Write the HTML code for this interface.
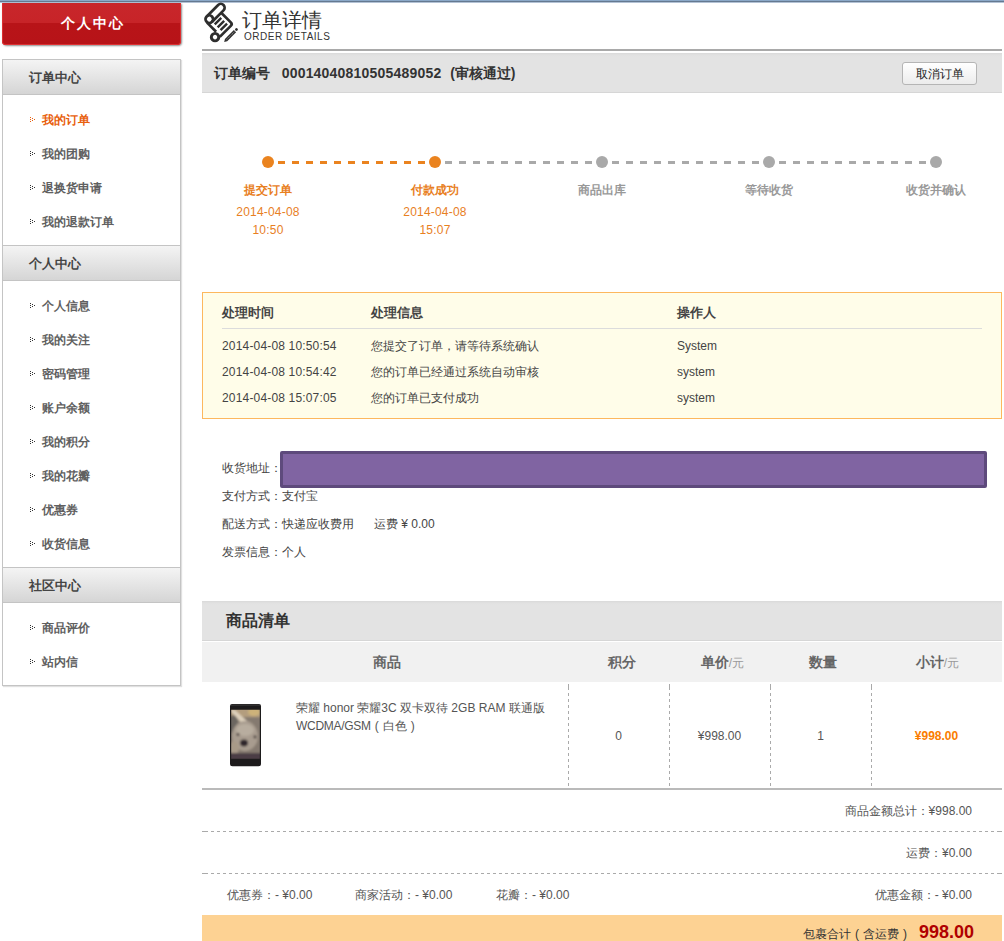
<!DOCTYPE html>
<html><head><meta charset="utf-8">
<style>
*{margin:0;padding:0;box-sizing:border-box}
html,body{width:1004px;height:941px;overflow:hidden;background:#fff;font-family:"Liberation Sans",sans-serif;font-size:12px;color:#555}
.abs{position:absolute}
#topline{left:0;top:0;width:1004px;height:2px;background:linear-gradient(#8aa8c8 50%,#657990 50%)}
#topline2{left:0;top:2px;width:1004px;height:1px;background:#b3c2d5}
#redbtn{left:2px;top:3px;width:179px;height:42px;border-radius:0 0 4px 4px;background:linear-gradient(#c8262b 0,#c72428 20px,#b81418 20px,#b71318 100%);box-shadow:inset 1px 0 0 #dc2d2f,inset -1px 0 0 #dc2d2f,inset 0 -1px 0 #de3133,1px 1px 2px rgba(0,0,0,.45);color:#fff;font-weight:bold;font-size:14px;text-align:center;line-height:40px;letter-spacing:2px;text-indent:2px}
#side{left:2px;top:59px;width:179px;height:627px;border:1px solid #c4c4c4;box-shadow:1px 1px 1px rgba(0,0,0,.12)}
.sh{position:absolute;left:0;width:177px;height:36px;border-top:1px solid #c4c4c4;border-bottom:1px solid #c4c4c4;background:linear-gradient(#f4f4f4,#d5d5d5);font-weight:bold;font-size:13px;color:#444;line-height:35px;padding-left:26px}
.si{position:absolute;left:0;width:177px;height:34px;line-height:36px;font-weight:bold;font-size:12px;color:#606060;padding-left:39px}
.si svg{position:absolute;left:27px;top:15px;color:#333}
.si.on svg{color:#e8600e}
.si.on{color:#e8600e}

#icon{left:200px;top:0;width:45px;height:45px}
#t1{left:242px;top:6px;font-size:20px;color:#333;line-height:28px;white-space:nowrap}
#t2{left:244px;top:30.6px;font-size:10px;color:#333;line-height:12px;white-space:nowrap;letter-spacing:0.5px}
#hline{left:202px;top:49px;width:800px;height:2px;background:#a9a9a9}
#obar{left:202px;top:53px;width:800px;height:40px;background:linear-gradient(#d9d9d9 0,#e1e1e1 2px,#e3e3e3 4px,#e3e3e3 calc(100% - 1px),#d6d6d6 calc(100% - 1px));font-size:14px;font-weight:bold;color:#333;line-height:40px;padding-left:12px;white-space:nowrap}
#cancel{left:902px;top:62px;width:75px;height:23px;border:1px solid #b5b5b5;border-radius:3px;background:linear-gradient(#fff,#ececec);font-size:12px;color:#222;line-height:22px;text-align:center}
.dot{position:absolute;width:12px;height:12px;border-radius:50%;top:156px}
.dash{position:absolute;top:161px;height:3px}
.lab{position:absolute;top:182px;width:120px;text-align:center;font-weight:bold;font-size:12px;line-height:16px;color:#999}
.dt{position:absolute;top:203px;width:120px;text-align:center;font-size:12px;line-height:18px;color:#e8801f;letter-spacing:.2px}
#log{left:202px;top:292px;width:800px;height:127px;border:1px solid #fdb85e;background:#fffde9}
.lh{position:absolute;top:12px;font-weight:bold;font-size:13px;color:#444;line-height:16px}
.lr{position:absolute;font-size:12px;color:#444;line-height:16px;white-space:nowrap}
.ts{letter-spacing:.17px}
.ad{position:absolute;left:222px;font-size:12px;color:#444;line-height:16px;white-space:nowrap}
#glist{left:202px;top:601px;width:800px;height:40px;background:linear-gradient(#d9d9d9 0,#e1e1e1 2px,#e3e3e3 4px,#e3e3e3 calc(100% - 1px),#d6d6d6 calc(100% - 1px));font-size:16px;font-weight:bold;color:#333;line-height:40px;padding-left:24px}
#ghead{left:202px;top:642px;width:800px;height:40px;background:#f1f1f1}
.gh{position:absolute;top:0;line-height:41px;text-align:center;font-weight:bold;font-size:14px;color:#666}
.gh span{font-weight:normal;color:#999;font-size:12px}
.vd{position:absolute;top:684px;height:104px;width:1px;background:linear-gradient(#aaa 0,#aaa 3px,transparent 3px) no-repeat,repeating-linear-gradient(transparent 0,transparent 3px,#aaa 3px,#aaa 6px)}
.gc{position:absolute;top:728px;text-align:center;font-size:12px;color:#555;line-height:16px}
#gbot{left:202px;top:788px;width:800px;height:2px;background:#bababa}
.hd{position:absolute;left:202px;width:800px;height:1px;background:linear-gradient(90deg,#aaa 0,#aaa 3px,transparent 3px) no-repeat,linear-gradient(90deg,transparent calc(100% - 5px),#aaa calc(100% - 5px)) no-repeat,repeating-linear-gradient(90deg,transparent 0,transparent 3px,#aaa 3px,#aaa 6px)}
.tr{position:absolute;right:32px;font-size:12px;color:#555;line-height:16px;white-space:nowrap}
.tl{position:absolute;font-size:12px;color:#555;line-height:16px;white-space:nowrap}
#total{left:202px;top:915px;width:800px;height:30px;background:#fdd293}
.fp{display:inline-block;width:12px;text-align:center}
</style></head><body>
<div id="topline" class="abs"></div>
<div id="topline2" class="abs"></div>
<div id="redbtn" class="abs">个人中心</div>

<div id="side" class="abs">
  <div class="sh" style="top:-1px">订单中心</div>
  <div class="si on" style="top:42px"><svg width="6" height="6" viewBox="0 0 6 6"><path d="M0 0h1v1H0zM0 2h1v1H0zM0 4h1v1H0zM2 1h1v1H2zM2 3h1v1H2zM4 2h1v1H4z" fill="currentColor"/></svg>我的订单</div>
  <div class="si" style="top:76px"><svg width="6" height="6" viewBox="0 0 6 6"><path d="M0 0h1v1H0zM0 2h1v1H0zM0 4h1v1H0zM2 1h1v1H2zM2 3h1v1H2zM4 2h1v1H4z" fill="currentColor"/></svg>我的团购</div>
  <div class="si" style="top:110px"><svg width="6" height="6" viewBox="0 0 6 6"><path d="M0 0h1v1H0zM0 2h1v1H0zM0 4h1v1H0zM2 1h1v1H2zM2 3h1v1H2zM4 2h1v1H4z" fill="currentColor"/></svg>退换货申请</div>
  <div class="si" style="top:144px"><svg width="6" height="6" viewBox="0 0 6 6"><path d="M0 0h1v1H0zM0 2h1v1H0zM0 4h1v1H0zM2 1h1v1H2zM2 3h1v1H2zM4 2h1v1H4z" fill="currentColor"/></svg>我的退款订单</div>
  <div class="sh" style="top:185px">个人中心</div>
  <div class="si" style="top:228px"><svg width="6" height="6" viewBox="0 0 6 6"><path d="M0 0h1v1H0zM0 2h1v1H0zM0 4h1v1H0zM2 1h1v1H2zM2 3h1v1H2zM4 2h1v1H4z" fill="currentColor"/></svg>个人信息</div>
  <div class="si" style="top:262px"><svg width="6" height="6" viewBox="0 0 6 6"><path d="M0 0h1v1H0zM0 2h1v1H0zM0 4h1v1H0zM2 1h1v1H2zM2 3h1v1H2zM4 2h1v1H4z" fill="currentColor"/></svg>我的关注</div>
  <div class="si" style="top:296px"><svg width="6" height="6" viewBox="0 0 6 6"><path d="M0 0h1v1H0zM0 2h1v1H0zM0 4h1v1H0zM2 1h1v1H2zM2 3h1v1H2zM4 2h1v1H4z" fill="currentColor"/></svg>密码管理</div>
  <div class="si" style="top:330px"><svg width="6" height="6" viewBox="0 0 6 6"><path d="M0 0h1v1H0zM0 2h1v1H0zM0 4h1v1H0zM2 1h1v1H2zM2 3h1v1H2zM4 2h1v1H4z" fill="currentColor"/></svg>账户余额</div>
  <div class="si" style="top:364px"><svg width="6" height="6" viewBox="0 0 6 6"><path d="M0 0h1v1H0zM0 2h1v1H0zM0 4h1v1H0zM2 1h1v1H2zM2 3h1v1H2zM4 2h1v1H4z" fill="currentColor"/></svg>我的积分</div>
  <div class="si" style="top:398px"><svg width="6" height="6" viewBox="0 0 6 6"><path d="M0 0h1v1H0zM0 2h1v1H0zM0 4h1v1H0zM2 1h1v1H2zM2 3h1v1H2zM4 2h1v1H4z" fill="currentColor"/></svg>我的花瓣</div>
  <div class="si" style="top:432px"><svg width="6" height="6" viewBox="0 0 6 6"><path d="M0 0h1v1H0zM0 2h1v1H0zM0 4h1v1H0zM2 1h1v1H2zM2 3h1v1H2zM4 2h1v1H4z" fill="currentColor"/></svg>优惠券</div>
  <div class="si" style="top:466px"><svg width="6" height="6" viewBox="0 0 6 6"><path d="M0 0h1v1H0zM0 2h1v1H0zM0 4h1v1H0zM2 1h1v1H2zM2 3h1v1H2zM4 2h1v1H4z" fill="currentColor"/></svg>收货信息</div>
  <div class="sh" style="top:507px">社区中心</div>
  <div class="si" style="top:550px"><svg width="6" height="6" viewBox="0 0 6 6"><path d="M0 0h1v1H0zM0 2h1v1H0zM0 4h1v1H0zM2 1h1v1H2zM2 3h1v1H2zM4 2h1v1H4z" fill="currentColor"/></svg>商品评价</div>
  <div class="si" style="top:584px"><svg width="6" height="6" viewBox="0 0 6 6"><path d="M0 0h1v1H0zM0 2h1v1H0zM0 4h1v1H0zM2 1h1v1H2zM2 3h1v1H2zM4 2h1v1H4z" fill="currentColor"/></svg>站内信</div>
</div>

<svg id="icon" class="abs" viewBox="0 0 45 45" width="45" height="45"><g transform="translate(19,22) rotate(-45)" fill="none" stroke="#2e2e2e" stroke-width="2.7">
<path d="M-4.4,-12.6H11.4A3.8,3.8 0 0 1 11.4,-5H-5"/>
<circle cx="-4.8" cy="-8.9" r="3.8" stroke-width="2.8"/>
<path d="M-8.9,-8V4.8"/>
<path d="M8.1,-5V8.6A2.5,2.5 0 0 1 5.6,11.1H-10"/>
<circle cx="-13.5" cy="7.9" r="3.7" stroke-width="3"/>
<path d="M-4.7,-1.3H4.5M-4.7,2.8H4.5M-4.7,6.9H4.5" stroke-width="2.4"/>
<path d="M-10.5,17.8L-7.8,16.2H4.8V19.4H-7.8Z" fill="#2e2e2e" stroke="none"/>
<path d="M-7,17.8H4.3" stroke="#fff" stroke-width="0.6" stroke-dasharray="1 1"/>
<circle cx="7" cy="17.7" r="1.4" fill="#2e2e2e" stroke="none"/>
</g></svg>
<div id="t1" class="abs">订单详情</div>
<div id="t2" class="abs">ORDER DETAILS</div>
<div id="hline" class="abs"></div>
<div id="obar" class="abs">订单编号&nbsp;&nbsp;&nbsp;<span style="letter-spacing:.2px">00014040810505489052</span>&nbsp;&nbsp;<span style="margin-left:1px">(审核通过)</span></div>
<div id="cancel" class="abs">取消订单</div>
<div class="dot" style="left:262px;background:#ea831f"></div>
<div class="dot" style="left:429px;background:#ea831f"></div>
<div class="dot" style="left:596px;background:#a9a9a9"></div>
<div class="dot" style="left:763px;background:#a9a9a9"></div>
<div class="dot" style="left:930px;background:#a9a9a9"></div>
<div class="dash" style="left:278px;width:151px;background:repeating-linear-gradient(90deg,#ea831f 0 7px,transparent 7px 14px)"></div>
<div class="dash" style="left:445px;width:151px;background:repeating-linear-gradient(90deg,#a9a9a9 0 7px,transparent 7px 14px)"></div>
<div class="dash" style="left:612px;width:151px;background:repeating-linear-gradient(90deg,#a9a9a9 0 7px,transparent 7px 14px)"></div>
<div class="dash" style="left:779px;width:151px;background:repeating-linear-gradient(90deg,#a9a9a9 0 7px,transparent 7px 14px)"></div>
<div class="lab" style="left:208px;color:#e8801f">提交订单</div>
<div class="lab" style="left:375px;color:#e8801f">付款成功</div>
<div class="lab" style="left:542px;">商品出库</div>
<div class="lab" style="left:709px;">等待收货</div>
<div class="lab" style="left:876px;">收货并确认</div>
<div class="dt" style="left:208px">2014-04-08<br>10:50</div>
<div class="dt" style="left:375px">2014-04-08<br>15:07</div>

<div id="log" class="abs">
 <div class="lh" style="left:19px">处理时间</div>
 <div class="lh" style="left:168px">处理信息</div>
 <div class="lh" style="left:474px">操作人</div>
 <div class="abs" style="left:19px;top:35px;width:760px;height:1px;background:#dcdcdc"></div>
 <div class="lr ts" style="left:19px;top:45px">2014-04-08 10:50:54</div>
 <div class="lr" style="left:168px;top:45px">您提交了订单，请等待系统确认</div>
 <div class="lr" style="left:474px;top:45px">System</div>
 <div class="lr ts" style="left:19px;top:71px">2014-04-08 10:54:42</div>
 <div class="lr" style="left:168px;top:71px">您的订单已经通过系统自动审核</div>
 <div class="lr" style="left:474px;top:71px">system</div>
 <div class="lr ts" style="left:19px;top:97px">2014-04-08 15:07:05</div>
 <div class="lr" style="left:168px;top:97px">您的订单已支付成功</div>
 <div class="lr" style="left:474px;top:97px">system</div>
</div>
<div class="ad" style="top:460px">收货地址：</div>
<div class="abs" style="left:280px;top:451px;width:707px;height:37px;background:#8064a2;border:3px solid #5e4a7c;border-radius:2px"></div>
<div class="ad" style="top:488px">支付方式：支付宝</div>
<div class="ad" style="top:516px">配送方式：快递应收费用&nbsp;&nbsp;&nbsp;&nbsp;&nbsp;&nbsp;运费 ¥ 0.00</div>
<div class="ad" style="top:544px">发票信息：个人</div>

<div id="glist" class="abs">商品清单</div>
<div id="ghead" class="abs">
 <div class="gh" style="left:2px;width:366px">商品</div>
 <div class="gh" style="left:369px;width:101px">积分</div>
 <div class="gh" style="left:470px;width:101px">单价<span>/元</span></div>
 <div class="gh" style="left:570px;width:101px">数量</div>
 <div class="gh" style="left:670px;width:131px">小计<span>/元</span></div>
</div>
<svg class="abs" style="left:226px;top:700px" width="40" height="70" viewBox="0 0 40 70">
<defs><filter id="bl" x="-20%" y="-20%" width="140%" height="140%"><feGaussianBlur stdDeviation="0.9"/></filter>
<clipPath id="sc"><rect x="5.2" y="9.7" width="28.6" height="49"/></clipPath></defs>
<rect x="4" y="4" width="31" height="62.2" rx="2.5" fill="#1d1b1c"/>
<rect x="4.5" y="4.5" width="30" height="1.2" fill="#3a3838"/>
<g clip-path="url(#sc)"><g filter="url(#bl)">
<rect x="0" y="5" width="40" height="60" fill="#857a6f"/>
<rect x="0" y="8" width="40" height="9" fill="#b39d7e"/>
<ellipse cx="28" cy="12" rx="6" ry="4" fill="#cdb27a"/>
<path d="M4,10 L9,10 L22,22 L17,25Z" fill="#ddd0bc"/>
<ellipse cx="7" cy="24" rx="5" ry="9" fill="#6c6660"/>
<ellipse cx="19" cy="36" rx="13" ry="15" fill="#a89c8f"/>
<ellipse cx="19" cy="30" rx="9" ry="6" fill="#b8ad9f"/>
<ellipse cx="8" cy="48" rx="5" ry="7" fill="#a89a88"/>
<circle cx="12" cy="34.5" r="1.4" fill="#3d3432"/>
<circle cx="29" cy="37" r="1.4" fill="#3d3432"/>
<ellipse cx="18" cy="43" rx="4" ry="3.4" fill="#2f2529"/>
<rect x="0" y="53" width="40" height="8" fill="#4b3d45"/>
</g></g>
</svg>
<div class="tl" style="left:296px;top:699px;line-height:18px;color:#555">荣耀 honor 荣耀3C 双卡双待 2GB RAM 联通版<br><span style="letter-spacing:-.28px">WCDMA/GSM</span><span class="fp">(</span>白色<span class="fp">)</span></div>
<div class="vd" style="left:568px"></div>
<div class="vd" style="left:669px"></div>
<div class="vd" style="left:770px"></div>
<div class="vd" style="left:871px"></div>
<div class="gc" style="left:568px;width:101px">0</div>
<div class="gc" style="left:669px;width:101px">¥998.00</div>
<div class="gc" style="left:770px;width:101px">1</div>
<div class="gc" style="left:871px;width:131px;color:#fa7d00;font-weight:bold">¥998.00</div>
<div id="gbot" class="abs"></div>
<div class="tr" style="top:803px">商品金额总计：¥998.00</div>
<div class="hd" style="top:831px"></div>
<div class="tr" style="top:845px">运费：¥0.00</div>
<div class="hd" style="top:873px"></div>
<div class="tl" style="left:227px;top:887px">优惠券：- ¥0.00</div>
<div class="tl" style="left:355px;top:887px">商家活动：- ¥0.00</div>
<div class="tl" style="left:496px;top:887px">花瓣：- ¥0.00</div>
<div class="tr" style="top:887px">优惠金额：- ¥0.00</div>
<div id="total" class="abs"></div>
<div class="tr" style="top:924px;color:#333;right:30px">包裹合计<span class="fp">(</span>含运费<span class="fp">)</span><b style="font-size:18px;color:#b00000;margin-left:8px">998.00</b></div>
</body></html>
